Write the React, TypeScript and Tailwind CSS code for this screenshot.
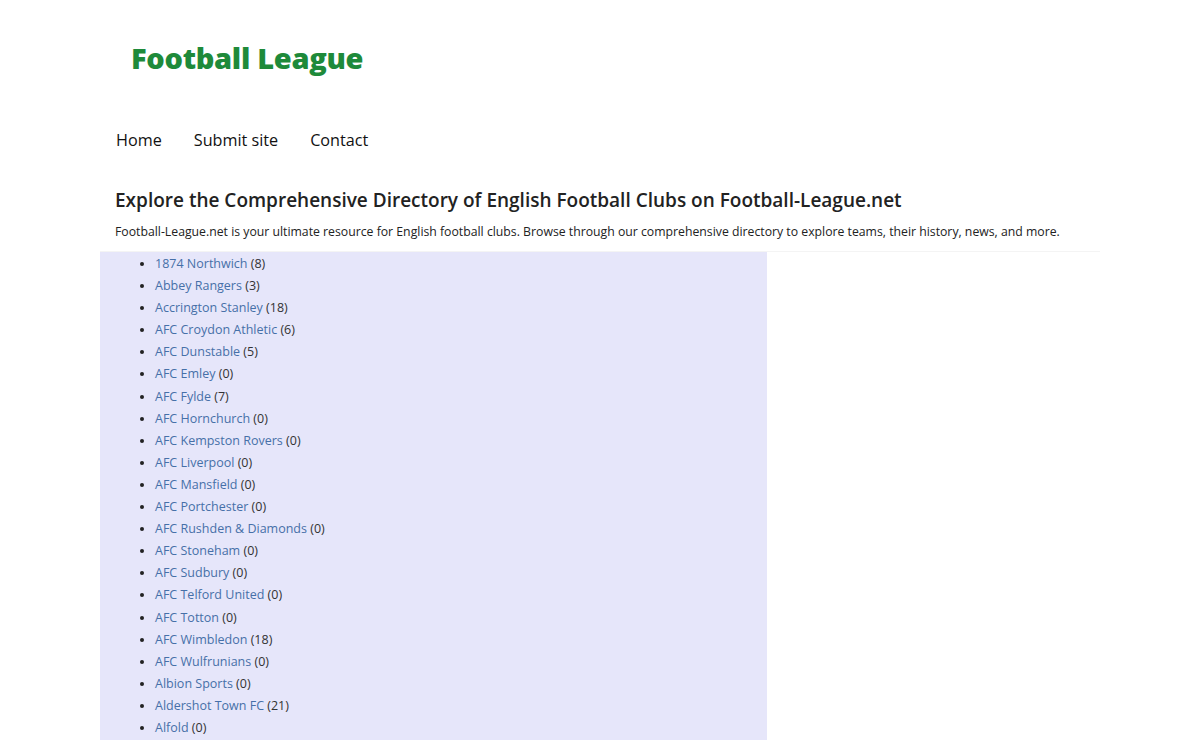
import React from "react";

const clubs: [string, number][] = [
  ["1874 Northwich", 8],
  ["Abbey Rangers", 3],
  ["Accrington Stanley", 18],
  ["AFC Croydon Athletic", 6],
  ["AFC Dunstable", 5],
  ["AFC Emley", 0],
  ["AFC Fylde", 7],
  ["AFC Hornchurch", 0],
  ["AFC Kempston Rovers", 0],
  ["AFC Liverpool", 0],
  ["AFC Mansfield", 0],
  ["AFC Portchester", 0],
  ["AFC Rushden & Diamonds", 0],
  ["AFC Stoneham", 0],
  ["AFC Sudbury", 0],
  ["AFC Telford United", 0],
  ["AFC Totton", 0],
  ["AFC Wimbledon", 18],
  ["AFC Wulfrunians", 0],
  ["Albion Sports", 0],
  ["Aldershot Town FC", 21],
  ["Alfold", 0],
];

export default function App() {
  return (
    <div className="min-h-screen bg-white text-[#222]" style={{ fontFamily: '"Open Sans", "Noto Sans", sans-serif' }}>
      <div className="mx-auto w-[1000px]">
        {/* Header */}
        <header className="pt-[43px] pl-[31px] h-[110px]">
          <a href="#" className="text-[29px] font-extrabold text-[#1e8a3a] leading-none tracking-[-0.3px]">
            Football League
          </a>
        </header>

        {/* Nav */}
        <nav className="flex gap-[32px] pl-4 pt-[18px] h-[76px] text-[16.2px] text-[#111]">
          <a href="#">Home</a>
          <a href="#">Submit site</a>
          <a href="#">Contact</a>
        </nav>

        {/* Intro */}
        <section className="px-[15px]">
          <h1 className="text-[19px] font-semibold leading-[28px] text-[#222]">
            Explore the Comprehensive Directory of English Football Clubs on Football-League.net
          </h1>
          <p className="mt-[9px] text-[12.25px] leading-[18px] text-[#222]">
            Football-League.net is your ultimate resource for English football clubs. Browse through our comprehensive directory to explore teams, their history, news, and more.
          </p>
        </section>

        {/* Directory */}
        <div className="mt-[10px] flex border-t border-[#f4f4f4]">
          <ul className="w-[667px] bg-[#e6e6fa] list-disc pl-[55px] pt-[1px] text-[12.5px] leading-[22.1px] h-[500px]">
            {clubs.map(([name, n]) => (
              <li key={name}>
                <a href="#" className="text-[#4670a8]">{name}</a> <span className="text-[#333]">({n})</span>
              </li>
            ))}
          </ul>
          <div className="flex-1" />
        </div>
      </div>
    </div>
  );
}
